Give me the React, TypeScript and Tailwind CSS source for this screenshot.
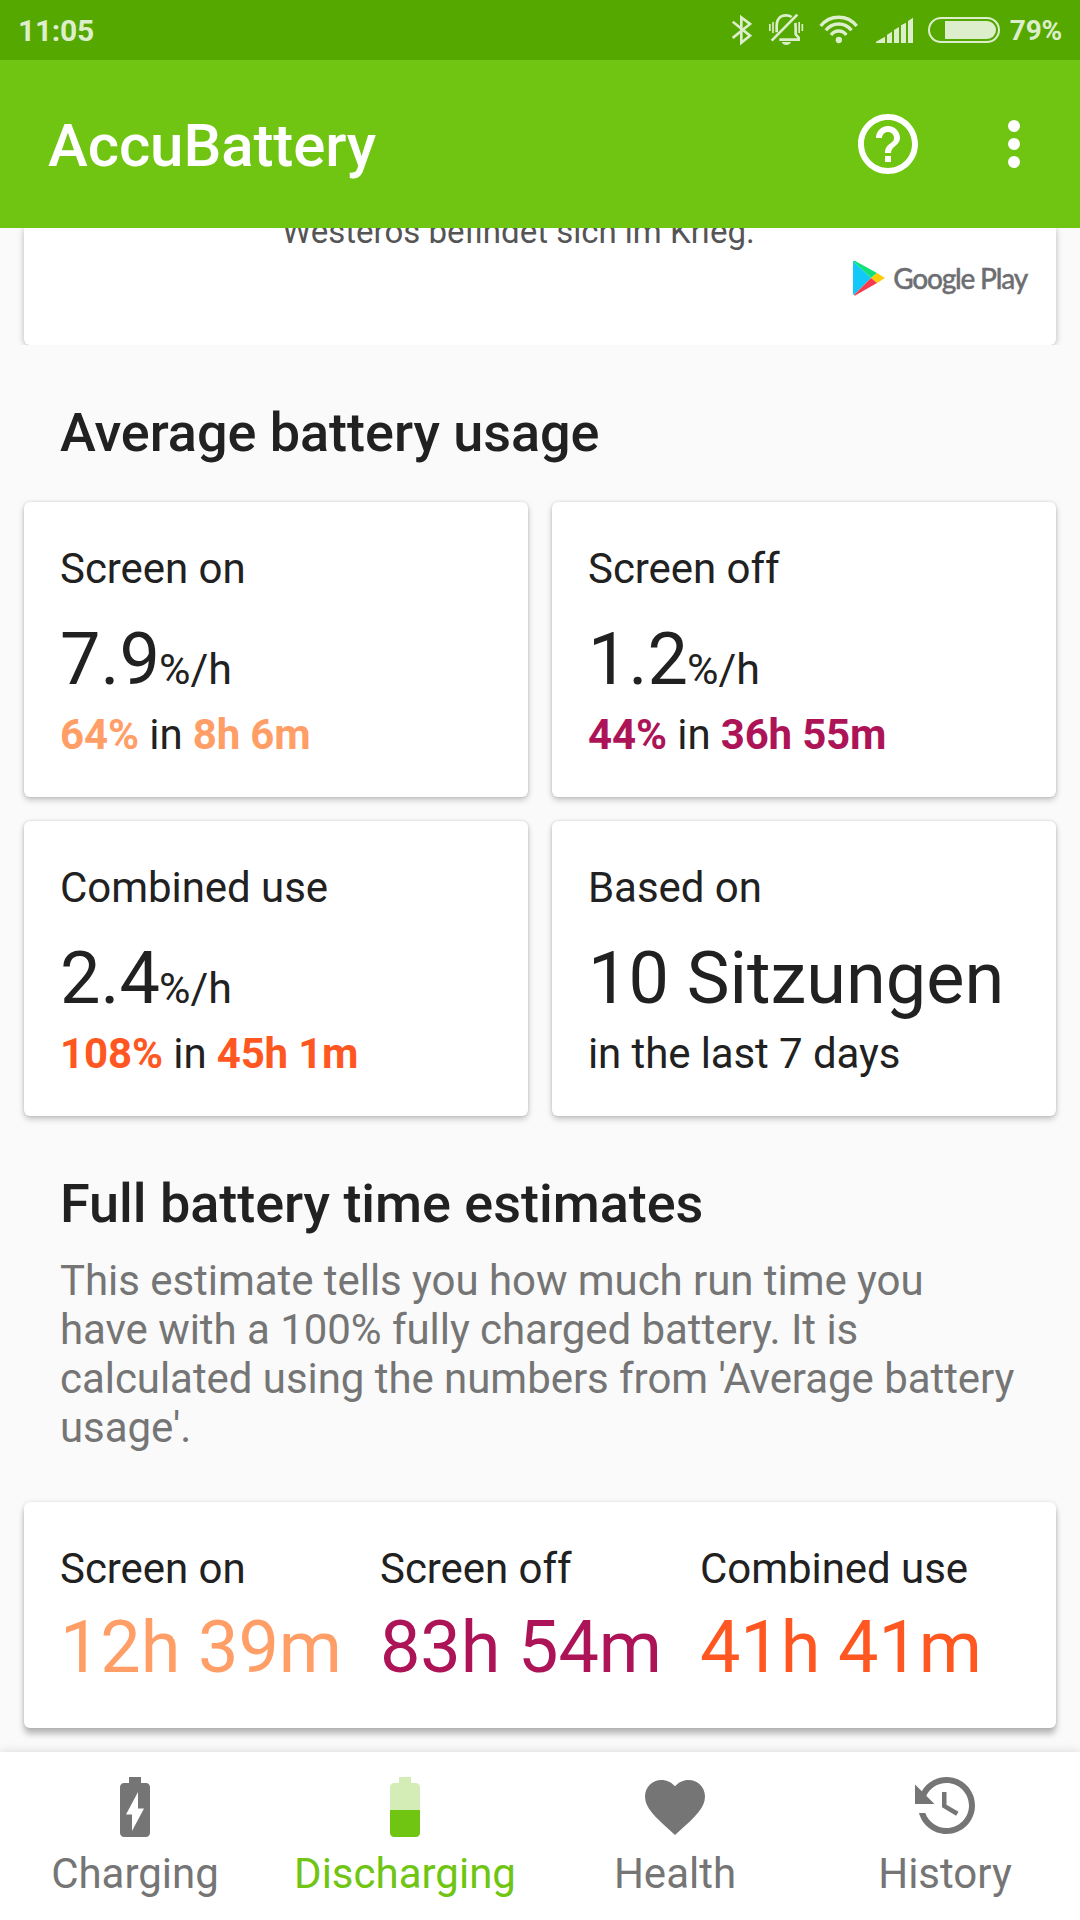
import type { ReactNode } from 'react';

interface UsageCardProps {
  label: string;
  value: string;
  unit?: string;
  children: ReactNode;
}

const estimates = [
  { label: 'Screen on', value: '12h 39m', color: 'text-[#ff9e66]' },
  { label: 'Screen off', value: '83h 54m', color: 'text-[#ad1457]' },
  { label: 'Combined use', value: '41h 41m', color: 'text-[#ff5722]' },
];

function StatusBar() {
  return (
    <div className="flex h-[60px] items-center bg-[#55a800] pl-[18px] pr-[18px] text-[#ddeecc]">
      <span className="pt-px text-[30px] font-bold leading-[60px] tracking-[-0.3px]">11:05</span>
      <div className="ml-auto flex h-[60px] items-center">
        <svg className="mr-[17px] h-[60px] w-5" viewBox="96 0 60 180" fill="none" stroke="currentColor" strokeWidth="8">
          <path d="M98 65 L150 107 L124 128 V52 L150 72 L98 114" />
        </svg>
        <svg className="mr-[15px] h-[60px] w-[35px]" viewBox="207 0 105 180" fill="none" stroke="currentColor">
          <path d="M230 97 V78 C230 56 242 46 258 46 C265 46 271 48 275 51 M286 69 C287 75 287 81 287 88 V103 L296 113 V119 H238" strokeWidth="8" />
          <path d="M215 122 L292 44" strokeWidth="8" />
          <path d="M209.500 72 V93 M219 66 V99 M297.500 66 V99 M307 72 V93" strokeWidth="5" />
          <path d="M245 126 H273 C269 138 249 138 245 126Z" fill="currentColor" stroke="none" />
        </svg>
        <svg className="mr-[17px] h-[60px] w-10" viewBox="357 0 120 180" fill="none" stroke="currentColor" strokeWidth="10">
          <path d="M362 78 A68.500 68.500 0 0 1 470 78 M377.500 91 A48.500 48.500 0 0 1 454.500 91 M393 105 A28 28 0 0 1 439 105" />
          <circle cx="416.500" cy="120" r="9.500" fill="currentColor" stroke="none" />
        </svg>
        <svg className="mr-[15px] h-[60px] w-[37px]" viewBox="528 0 111 180" fill="currentColor">
          <path d="M528 129 V125 L555 110 V129Z M561 129 V104 L576 95 V129Z M582 129 V90 L597 81 V129Z M603 129 V76 L618 68 V129Z M624 129 V63 L639 53 V129Z" />
        </svg>
        <svg className="mr-[10px] h-[60px] w-[72px]" viewBox="684 0 216 180" fill="currentColor">
          <rect x="687" y="54" width="210" height="72" rx="36" fill="none" stroke="currentColor" strokeWidth="6" />
          <path d="M735 63 H861 A27 27 0 0 1 861 117 H735Z" />
        </svg>
        <span className="pt-px text-[28px] font-bold leading-[60px] tracking-[-0.2px]">79%</span>
      </div>
    </div>
  );
}

function AppBar() {
  return (
    <header className="flex h-[168px] items-center bg-[#70c412] pl-12 pr-[30px] text-white">
      <h1 className="pt-1 text-[60px] font-medium leading-[70px] tracking-[-0.1px]">AccuBattery</h1>
      <svg className="ml-auto size-[72px]" viewBox="0 0 24 24" fill="currentColor">
        <path d="M11 18h2v-2h-2v2zm1-16C6.480 2 2 6.480 2 12s4.480 10 10 10 10-4.480 10-10S17.520 2 12 2zm0 18c-4.410 0-8-3.590-8-8s3.590-8 8-8 8 3.590 8 8-3.590 8-8 8zm0-14c-2.210 0-4 1.790-4 4h2c0-1.100.9-2 2-2s2 .9 2 2c0 2-3 1.750-3 5h2c0-2.250 3-2.500 3-5 0-2.210-1.790-4-4-4z" />
      </svg>
      <svg className="ml-[54px] size-[72px]" viewBox="0 0 24 24" fill="currentColor">
        <circle cx="12" cy="6" r="2" />
        <circle cx="12" cy="12" r="2" />
        <circle cx="12" cy="18" r="2" />
      </svg>
    </header>
  );
}

// Scrolled halfway under the app bar, so its text line is clipped at the top
function AdCard() {
  return (
    <div className="h-[117px] overflow-hidden px-6">
      <div className="flex h-[117px] flex-col rounded-b-[6px] bg-white px-[29px] shadow-[0_1px_6px_rgba(0,0,0,0.28)]">
        <p className="-mt-4 pl-[229px] text-[33px] leading-[39px] text-[#555]">Westeros befindet sich im Krieg.</p>
        <div className="mt-[9px] flex items-center justify-end">
          <svg className="mr-[8px] h-9 w-8" viewBox="0 0 32 36">
            <path d="M0 1 L18 18 L1 35 Q0 35 0 33Z" fill="#12c8f8" />
            <path d="M0 1 Q2 0 4 2 L24 13 L18 18Z" fill="#12e07a" />
            <path d="M24 13 L32 18 L24 23 L18 18Z" fill="#ffca08" />
            <path d="M18 18 L24 23 L3 35 Q2 36 1 35Z" fill="#f93a4c" />
          </svg>
          <span className="font-['Lato',sans-serif] text-[28px] font-medium leading-9 tracking-[-1.2px] text-[#6d6e71] [-webkit-text-stroke:0.4px_#6d6e71]">Google Play</span>
        </div>
      </div>
    </div>
  );
}

function UsageCard({ label, value, unit, children }: UsageCardProps) {
  return (
    <div className="h-[295px] rounded-[6px] bg-white px-9 pt-[42px] shadow-[0_3px_6px_rgba(0,0,0,0.22),0_0_3px_rgba(0,0,0,0.14)]">
      <div className="text-[42px] leading-[49px] tracking-[-0.05px]">{label}</div>
      <div className="mt-[25px] whitespace-nowrap text-[72px] leading-[84px]">
        {value}
        {unit && <span className="-ml-px text-[43px] leading-none">{unit}</span>}
      </div>
      <div className="mt-2 text-[42px] leading-[49px] tracking-[-0.1px]">{children}</div>
    </div>
  );
}

function NavItem({ label, active, children }: { label: string; active?: boolean; children: ReactNode }) {
  return (
    <div className={active ? 'flex flex-col items-center text-[#70c412]' : 'flex flex-col items-center text-[#757575]'}>
      <svg className="mt-[19px] size-[72px]" viewBox="0 0 24 24" fill="currentColor">
        {children}
      </svg>
      <span className="mt-[6px] text-[42px] leading-[49px]">{label}</span>
    </div>
  );
}

function BottomNav() {
  return (
    <nav className="relative grid h-[168px] grid-cols-4 bg-white shadow-[0_0_10px_rgba(0,0,0,0.14)]">
      <NavItem label="Charging">
        <path d="M15.670 4H14V2h-4v2H8.330C7.600 4 7 4.600 7 5.330v15.330C7 21.400 7.600 22 8.330 22h7.330c.74 0 1.340-.6 1.340-1.330V5.330C17 4.600 16.400 4 15.670 4zM11 20v-5.500H9L13 7v5.500h2L11 20z" />
      </NavItem>
      <NavItem label="Discharging" active>
        <path fillOpacity=".3" d="M17 5.330C17 4.600 16.400 4 15.670 4H14V2h-4v2H8.330C7.600 4 7 4.600 7 5.330V13h10V5.330z" />
        <path d="M7 13v7.670C7 21.400 7.600 22 8.330 22h7.330c.74 0 1.340-.6 1.340-1.330V13H7z" />
      </NavItem>
      <NavItem label="Health">
        <path d="M12 21.350l-1.450-1.320C5.400 15.360 2 12.280 2 8.500 2 5.420 4.420 3 7.500 3c1.740 0 3.410.81 4.500 2.090C13.090 3.810 14.760 3 16.500 3 19.580 3 22 5.420 22 8.500c0 3.780-3.400 6.860-8.550 11.540L12 21.350z" />
      </NavItem>
      <NavItem label="History">
        <path d="M11 7v5.110l4.710 2.790.79-1.280-4-2.370V7zm1.500-5C8.970 2 5.910 3.920 4.270 6.770L2 4.500V11h6.500L5.750 8.250C6.960 5.730 9.500 4 12.500 4c4.140 0 7.500 3.360 7.500 7.500S16.640 19 12.500 19c-3.270 0-6.030-2.090-7.060-5h-2.110c1.100 4.030 4.770 7 9.170 7 5.240 0 9.500-4.250 9.500-9.500S17.750 2 12.500 2z" />
      </NavItem>
    </nav>
  );
}

export default function App() {
  return (
    <div className="flex h-[1920px] w-[1080px] flex-col overflow-hidden bg-[#fafafa] font-['Roboto',sans-serif] text-[#212121]">
      <StatusBar />
      <AppBar />

      <main className="flex-1">
        <AdCard />

        <h2 className="mt-14 pl-[60px] text-[54px] font-medium leading-[63px] tracking-[-0.04px]">Average battery usage</h2>
        <div className="mt-[38px] grid grid-cols-2 gap-6 px-6">
          <UsageCard label="Screen on" value="7.9" unit="%/h">
            <b className="text-[#ff9e66]">64%</b> in <b className="tracking-[-0.2px] text-[#ff9e66]">8h 6m</b>
          </UsageCard>
          <UsageCard label="Screen off" value="1.2" unit="%/h">
            <b className="text-[#ad1457]">44%</b> in <b className="tracking-[-0.2px] text-[#ad1457]">36h 55m</b>
          </UsageCard>
          <UsageCard label="Combined use" value="2.4" unit="%/h">
            <b className="text-[#ff5722]">108%</b> in <b className="tracking-[-0.2px] text-[#ff5722]">45h 1m</b>
          </UsageCard>
          <UsageCard label="Based on" value="10 Sitzungen">
            in the last 7 days
          </UsageCard>
        </div>

        <h2 className="mt-14 pl-[60px] text-[54px] font-medium leading-[63px] tracking-[-0.04px]">Full battery time estimates</h2>
        <p className="mt-[21px] px-[60px] text-[42px] leading-[49px] tracking-[-0.05px] text-[#757575]">
          This estimate tells you how much run time you have with a 100% fully charged battery. It is calculated
          using the numbers from 'Average battery usage'.
        </p>

        <div className="mx-6 mt-[50px] grid h-[226px] grid-cols-[320px_320px_1fr] rounded-[6px] bg-white pl-9 pt-[42px] shadow-[0_6px_6px_rgba(0,0,0,0.26),0_0_4px_rgba(0,0,0,0.12)]">
          {estimates.map((item) => (
            <div key={item.label} className="whitespace-nowrap">
              <div className="text-[42px] leading-[49px] tracking-[-0.05px]">{item.label}</div>
              <div className={`mt-[13px] text-[72px] leading-[84px] tracking-[-0.1px] ${item.color}`}>{item.value}</div>
            </div>
          ))}
        </div>
      </main>

      <BottomNav />
    </div>
  );
}
